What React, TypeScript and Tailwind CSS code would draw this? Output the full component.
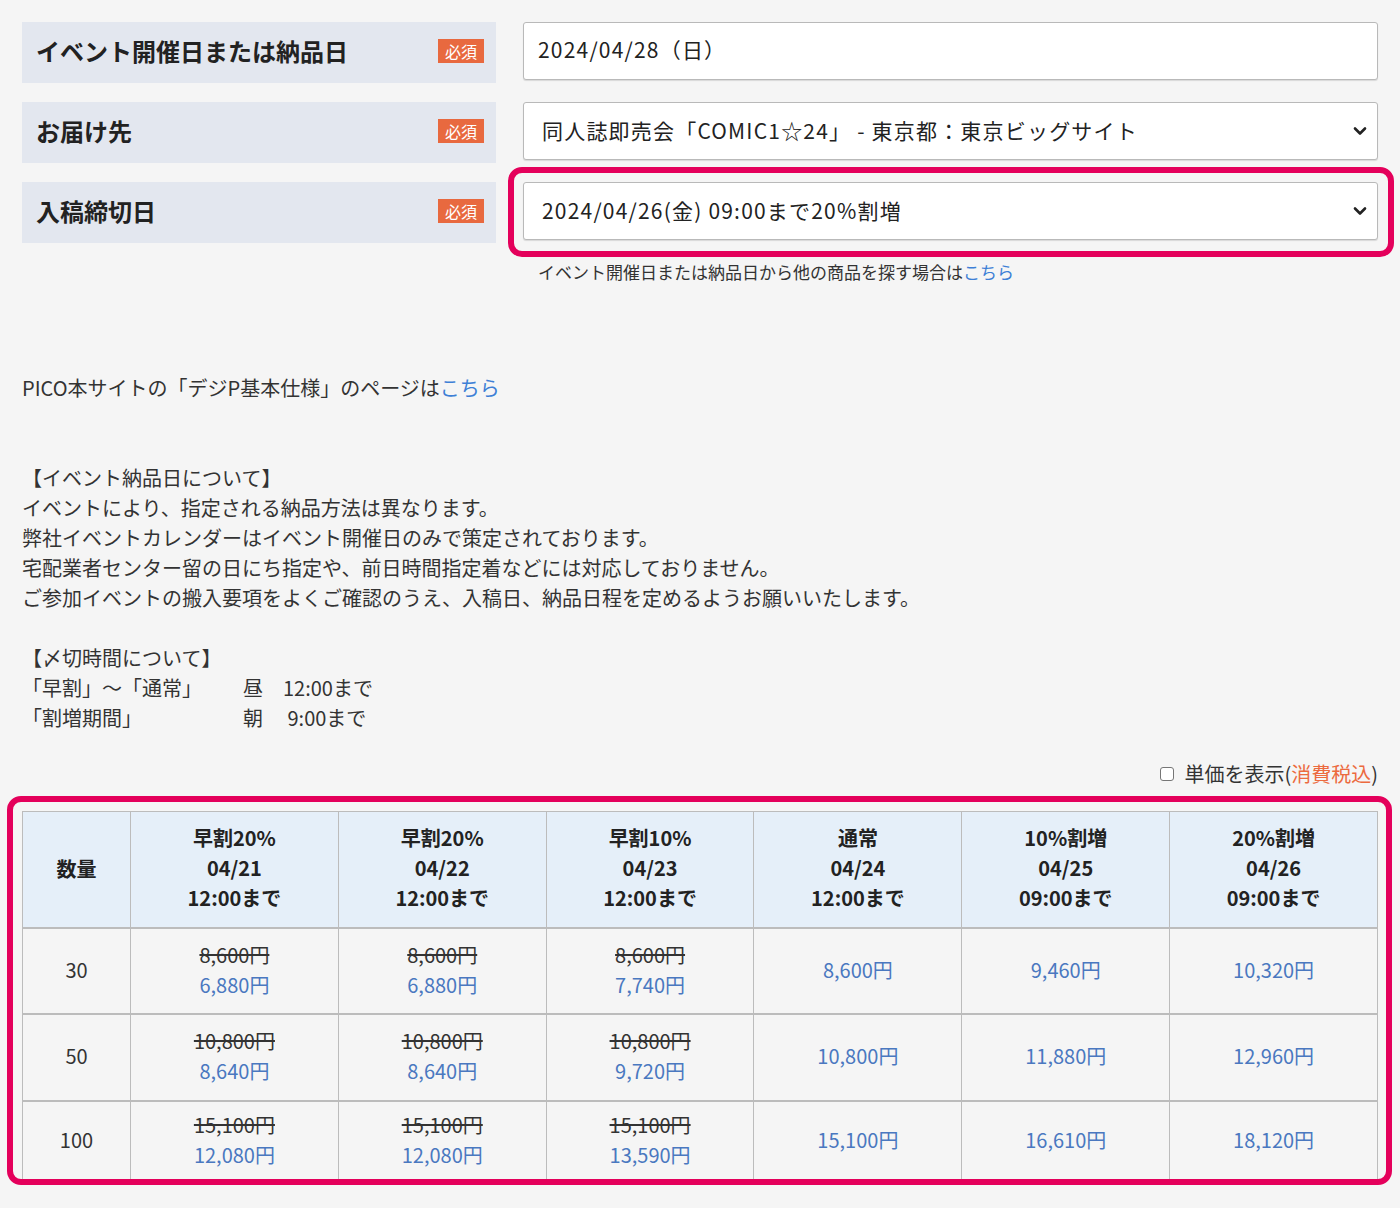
import React from 'react'

const FONT = { fontFamily: '"Noto Sans CJK JP", "Noto Sans", sans-serif' }

const Badge = () => (
  <span className="inline-flex h-[24px] w-[46px] items-center justify-center bg-[#e8693f] text-[16px] leading-none text-white">
    必須
  </span>
)

const Chevron = () => (
  <svg
    className="pointer-events-none absolute right-[11px] top-1/2 h-[10px] w-[14px] -translate-y-1/2"
    viewBox="0 0 14 10"
    fill="none"
  >
    <path d="M2 2.5 L7 7.5 L12 2.5" stroke="#222" strokeWidth="2.6" strokeLinecap="round" strokeLinejoin="round" />
  </svg>
)

const FieldLabel = ({ text }: { text: string }) => (
  <div className="flex h-[61px] w-[474px] shrink-0 items-center justify-between bg-[#e3e7ef] pb-[3px] pl-[14px] pr-[12px]">
    <span className="text-[24px] font-bold text-[#222]">{text}</span>
    <Badge />
  </div>
)

const boxClass =
  'h-[58px] w-full rounded-[3px] border border-[#b9b9b9] bg-white text-[21px] tracking-[1.2px] text-[#222] shadow-[0_1px_1px_rgba(0,0,0,0.12)]'

type Col = { title: string; date: string; until: string }

const columns: Col[] = [
  { title: '早割20%', date: '04/21', until: '12:00まで' },
  { title: '早割20%', date: '04/22', until: '12:00まで' },
  { title: '早割10%', date: '04/23', until: '12:00まで' },
  { title: '通常', date: '04/24', until: '12:00まで' },
  { title: '10%割増', date: '04/25', until: '09:00まで' },
  { title: '20%割増', date: '04/26', until: '09:00まで' },
]

const rows = [
  { qty: '30', h: 'h-[86px] border-b-2 border-[#bcbcbc]', base: '8,600円', prices: ['6,880円', '6,880円', '7,740円', '8,600円', '9,460円', '10,320円'] },
  { qty: '50', h: 'h-[87px] border-b-2 border-[#bcbcbc]', base: '10,800円', prices: ['8,640円', '8,640円', '9,720円', '10,800円', '11,880円', '12,960円'] },
  { qty: '100', h: 'h-[80px]', base: '15,100円', prices: ['12,080円', '12,080円', '13,590円', '15,100円', '16,610円', '18,120円'] },
]

export default function App() {
  return (
    <div className="min-h-[1208px] bg-[#f5f5f5] px-[22px] pt-[22px] text-[#333]" style={FONT}>
      {/* form rows */}
      <div className="flex flex-col gap-[19px]">
        <div className="flex items-start gap-[27px]">
          <FieldLabel text="イベント開催日または納品日" />
          <div className={`${boxClass} flex items-center pb-[2px] pl-[14px]`}>2024/04/28（日）</div>
        </div>

        <div className="flex items-start gap-[27px]">
          <FieldLabel text="お届け先" />
          <div className="relative w-full">
            <select
              className={`${boxClass} appearance-none pl-[18px] outline-none`}
              defaultValue="a"
              style={FONT}
            >
              <option value="a">同人誌即売会「COMIC1☆24」 - 東京都：東京ビッグサイト</option>
            </select>
            <Chevron />
          </div>
        </div>

        <div className="flex items-start gap-[27px]">
          <FieldLabel text="入稿締切日" />
          <div className="w-full">
            <div className="relative w-full">
              <select
                className={`${boxClass} appearance-none pl-[18px] outline-none`}
                defaultValue="a"
                style={FONT}
              >
                <option value="a">2024/04/26(金) 09:00まで20%割増</option>
              </select>
              <Chevron />
              <div className="pointer-events-none absolute -bottom-[17px] -left-[15px] -right-[16px] -top-[15px] rounded-[14px] border-[6px] border-[#e4005b]" />
            </div>
            <p className="mt-[19px] pl-[15px] text-[17px] leading-[26px] text-[#333]">
              イベント開催日または納品日から他の商品を探す場合は<a className="text-[#3d7fd6]">こちら</a>
            </p>
          </div>
        </div>
      </div>

      {/* notes */}
      <div className="mt-[88px] text-[20px] leading-[30px] text-[#333]">
        <p>
          PICO本サイトの「デジP基本仕様」のページは<a className="text-[#3d7fd6]">こちら</a>
        </p>
        <div className="h-[60px]" />
        <p>【イベント納品日について】</p>
        <p>イベントにより、指定される納品方法は異なります。</p>
        <p>弊社イベントカレンダーはイベント開催日のみで策定されております。</p>
        <p>宅配業者センター留の日にち指定や、前日時間指定着などには対応しておりません。</p>
        <p>ご参加イベントの搬入要項をよくご確認のうえ、入稿日、納品日程を定めるようお願いいたします。</p>
        <div className="h-[30px]" />
        <p>【〆切時間について】</p>
        <p className="flex">
          <span className="w-[221px]">「早割」～「通常」</span>
          <span>昼　12:00まで</span>
        </p>
        <p className="flex">
          <span className="w-[221px]">「割増期間」</span>
          <span>朝　 9:00まで</span>
        </p>
      </div>

      {/* unit price toggle */}
      <div className="mt-[26px] flex items-center justify-end gap-[10px] text-[20px] leading-[30px]">
        <span className="h-[14px] w-[14px] rounded-[3px] border border-[#767676] bg-white" />
        <span>
          単価を表示(<span className="text-[#ec6a3e]">消費税込</span>)
        </span>
      </div>

      {/* price table */}
      <div className="relative mt-[22px]">
        <table className="w-full table-fixed border-collapse text-center text-[20px] leading-[30px]">
          <colgroup>
            <col className="w-[108px]" />
          </colgroup>
          <thead>
            <tr className="h-[116px] bg-[#e5eff9]">
              <th className="border border-[#bcbcbc] border-b-2 font-bold text-[#222]">数量</th>
              {columns.map((c, i) => (
                <th key={i} className="border border-[#bcbcbc] border-b-2 pb-[2px] font-bold text-[#222]">
                  <div>{c.title}</div>
                  <div>{c.date}</div>
                  <div>{c.until}</div>
                </th>
              ))}
            </tr>
          </thead>
          <tbody>
            {rows.map((r) => (
              <tr key={r.qty} className={r.h}>
                <td className="border-x border-[#bcbcbc] pb-[2px] text-[#333]">{r.qty}</td>
                {r.prices.map((p, pi) => (
                  <td key={pi} className="border-x border-[#bcbcbc] pb-[2px]">
                    {pi < 3 && <div className="text-[#333] line-through">{r.base}</div>}
                    <div className="text-[#4a78c0]">{p}</div>
                  </td>
                ))}
              </tr>
            ))}
          </tbody>
        </table>
        <div className="pointer-events-none absolute -bottom-[4px] -left-[15px] -right-[14px] -top-[15px] rounded-[14px] border-[6px] border-[#e4005b]" />
      </div>
    </div>
  )
}
